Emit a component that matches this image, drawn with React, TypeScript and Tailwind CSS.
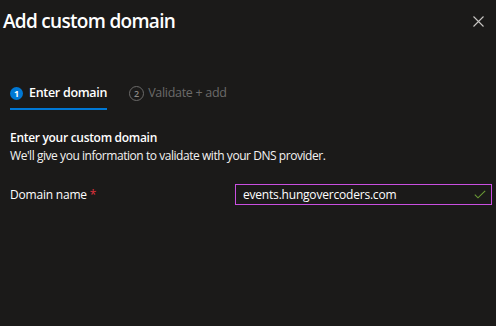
import React from 'react';

const font = { fontFamily: '"Open Sans", "Segoe UI", sans-serif' };

const StepCircle: React.FC<{ n: number; active?: boolean }> = ({ n, active }) =>
  active ? (
    <span className="flex h-[13px] w-[13px] items-center justify-center rounded-full bg-[#0078d4] text-[9px] font-bold leading-none text-white">
      {n}
    </span>
  ) : (
    <span className="flex h-[15px] w-[15px] items-center justify-center rounded-full border border-[#6b6a69] text-[9px] font-semibold leading-none text-[#8a8886]">
      {n}
    </span>
  );

export default function App() {
  return (
    <div className="h-[326px] w-[496px] overflow-hidden bg-[#1b1a19] text-white" style={font}>
      <div className="flex items-start justify-between pl-[3px] pr-[12px] pt-[6px]">
        <h1 className="text-[19px] font-semibold leading-[30px] tracking-[-0.7px] text-white">Add custom domain</h1>
        <svg className="mt-[10px]" width="11" height="11" viewBox="0 0 11 11">
          <path d="M0.5 0.5 L10.5 10.5 M10.5 0.5 L0.5 10.5" stroke="#c8c6c4" strokeWidth="1.1" />
        </svg>
      </div>

      <div className="ml-[10px] mt-[47px] flex items-start gap-[22px] text-[12.5px]">
        <div className="flex flex-col">
          <div className="flex items-center gap-[6px] pb-[5px]">
            <StepCircle n={1} active />
            <span className="font-semibold leading-[20px] tracking-[-0.3px]">Enter domain</span>
          </div>
          <div className="h-[2px] w-full bg-[#0078d4]" />
        </div>
        <div className="flex items-center gap-[4px] text-[#6b6a69]">
          <StepCircle n={2} />
          <span className="leading-[20px] tracking-[-0.3px]">Validate + add</span>
        </div>
      </div>

      <div className="ml-[10px] mt-[19px] text-[12px] leading-[18px]">
        <div className="font-semibold tracking-[-0.3px]">Enter your custom domain</div>
        <div className="tracking-[-0.45px] text-[#f3f2f1]">We'll give you information to validate with your DNS provider.</div>
      </div>

      <div className="ml-[10px] mr-[4px] mt-[19px] flex items-center text-[12px]">
        <div className="w-[225px] tracking-[-0.2px]">
          Domain name <span className="text-[#e0323d]">*</span>
        </div>
        <div className="flex h-[21px] flex-1 items-center justify-between border border-[#c94fe0] pl-[7px] pr-[5px]">
          <span className="tracking-[-0.2px]">events.hungovercoders.com</span>
          <svg width="12" height="9" viewBox="0 0 12 9">
            <path d="M0.8 4.6 L4 7.8 L11.2 0.8" stroke="#6b9a35" strokeWidth="1.1" fill="none" />
          </svg>
        </div>
      </div>
    </div>
  );
}
